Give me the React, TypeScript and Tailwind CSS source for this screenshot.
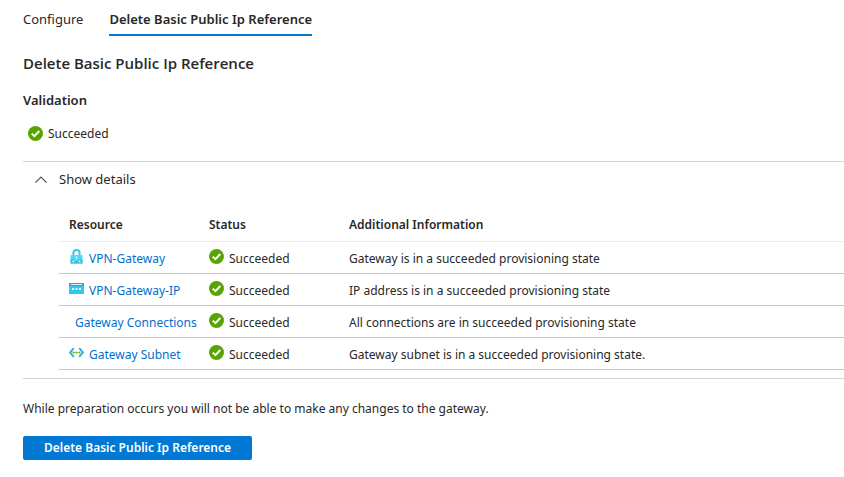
const columns = ['Resource', 'Status', 'Additional Information']

const resources = [
    { name: 'VPN-Gateway', icon: 'gateway', info: 'Gateway is in a succeeded provisioning state' },
    { name: 'VPN-Gateway-IP', icon: 'ip', info: 'IP address is in a succeeded provisioning state' },
    { name: 'Gateway Connections', icon: 'none', info: 'All connections are in succeeded provisioning state' },
    { name: 'Gateway Subnet', icon: 'subnet', info: 'Gateway subnet is in a succeeded provisioning state.' },
]

function SuccessIcon() {
    return (
        <svg className="size-[15px] shrink-0" viewBox="0 0 15 15" aria-hidden="true">
            <circle cx="7.5" cy="7.5" r="7.5" fill="#57a300" />
            <path d="M3.7 7.6 6.4 10.2 11.3 5" fill="none" stroke="#fff" strokeWidth="2" />
        </svg>
    )
}

function ResourceIcon({ icon }: { icon: string }) {
    if (icon === 'gateway') {
        return (
            <svg className="size-[15px] shrink-0" viewBox="0 0 15 15" aria-hidden="true">
                <path d="M4.4 7V4a3.100 3.100 0 0 1 6.200 0V7" fill="none" stroke="#3ccbea" strokeWidth="2" />
                <rect x="1.5" y="6" width="12" height="8.6" rx="0.7" fill="#50d9f5" />
                <path d="M1.500 10.500h12v3.400a.7.7 0 0 1-.7.7H2.200a.7.7 0 0 1-.7-.7z" fill="#35bbe2" />
                <path d="M7.500 8.500v2.500M4.500 12.500l3-2 3 2" fill="none" stroke="#b9f1fb" strokeWidth="0.7" />
                <circle cx="7.5" cy="8.500" r="0.9" fill="#e6fbff" />
                <circle cx="4.3" cy="12.500" r="0.9" fill="#e6fbff" />
                <circle cx="10.7" cy="12.500" r="0.9" fill="#e6fbff" />
            </svg>
        )
    }

    if (icon === 'ip') {
        return (
            <svg className="size-[15px] shrink-0" viewBox="0 0 15 15" aria-hidden="true">
                <path d="M0 2h15v3H0z" fill="#6f8f9c" />
                <path d="M2 3h11v1H2z" fill="#e8eef0" />
                <path d="M0 5h15v7.400a.6.6 0 0 1-.6.6H.6a.6.6 0 0 1-.6-.6z" fill="#32c8ec" />
                <rect x="3" y="7" width="2" height="2" fill="#d9f8ff" />
                <rect x="6.5" y="7" width="2" height="2" fill="#d9f8ff" />
                <rect x="10" y="7" width="2" height="2" fill="#d9f8ff" />
            </svg>
        )
    }

    if (icon === 'subnet') {
        return (
            <svg className="size-[15px] shrink-0" viewBox="0 0 15 15" aria-hidden="true">
                <path d="M4.800 3.200 1 7.500l3.800 4.300" fill="none" stroke="#35aae8" strokeWidth="1.9" />
                <path d="M10.200 3.200 14 7.500l-3.800 4.300" fill="none" stroke="#35aae8" strokeWidth="1.9" />
                <path d="M4 7.500h7" stroke="#a9d66e" strokeWidth="0.8" />
                <circle cx="4.5" cy="7.5" r="1.1" fill="#6bb320" />
                <circle cx="7.5" cy="7.5" r="1.1" fill="#6bb320" />
                <circle cx="10.5" cy="7.5" r="1.1" fill="#6bb320" />
            </svg>
        )
    }

    return null
}

function App() {
    return (
        <main className="bg-white pl-[23px] font-['Noto_Sans','Open_Sans',sans-serif] text-[12px] leading-5 text-[#292827]">
            <nav className="flex items-start gap-[26px] pt-[9px] text-[13px]">
                <button type="button">Configure</button>
                <button type="button" className="border-b-2 border-[#0078d4] pb-[5px] font-semibold">
                    Delete Basic Public Ip Reference
                </button>
            </nav>

            <h1 className="mt-[17px] font-['Open_Sans',sans-serif] text-[15px] font-semibold">
                Delete Basic Public Ip Reference
            </h1>
            <h2 className="mt-[17px] text-[13px] font-semibold">Validation</h2>
            <div className="mt-[13px] flex items-center gap-[5px] pl-[5px]">
                <SuccessIcon />
                <span className="pt-px">Succeeded</span>
            </div>

            <section className="mt-[17px] border-y border-[#d2d2d2] pt-[7px] pb-2">
                <button type="button" aria-expanded="true" className="flex items-center gap-3 pl-3 text-[13px]">
                    <svg className="h-[7px] w-3" viewBox="0 0 12 7" aria-hidden="true">
                        <path d="M.5 6.5 6 1l5.5 5.5" fill="none" stroke="#555" strokeWidth="1.1" />
                    </svg>
                    Show details
                </button>

                <div className="mt-5 pl-9">
                    <table className="w-full table-fixed border-collapse text-left">
                        <thead>
                            <tr className="h-8 border-b border-[#eaeaea]">
                                {columns.map((column) => (
                                    <th key={column} className="px-[10px] font-semibold first:w-[140px] nth-2:w-[140px]">
                                        {column}
                                    </th>
                                ))}
                            </tr>
                        </thead>
                        <tbody>
                            {resources.map((resource) => (
                                <tr key={resource.name} className="h-8 border-b border-[#c8c8c8]">
                                    <td className="pt-[3px] pl-[10px] whitespace-nowrap">
                                        <div className={resource.icon === 'none' ? 'flex pl-[6px]' : 'flex gap-[5px]'}>
                                            <ResourceIcon icon={resource.icon} />
                                            <a href="#" className="text-[#006fd0]">{resource.name}</a>
                                        </div>
                                    </td>
                                    <td className="px-[10px] pt-[3px]">
                                        <div className="flex gap-[5px]">
                                            <SuccessIcon />
                                            <span>Succeeded</span>
                                        </div>
                                    </td>
                                    <td className="px-[10px] pt-[3px]">{resource.info}</td>
                                </tr>
                            ))}
                        </tbody>
                    </table>
                </div>
            </section>

            <p className="mt-5">While preparation occurs you will not be able to make any changes to the gateway.</p>
            <button type="button" className="mt-[17px] h-6 rounded-[2px] bg-[#0078d4] px-[21px] font-semibold text-white">
                Delete Basic Public Ip Reference
            </button>
        </main>
    )
}

export default App
